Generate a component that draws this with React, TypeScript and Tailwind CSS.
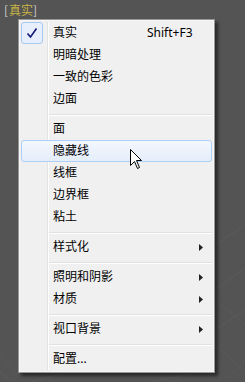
import React from "react"

type Item =
  | { kind: "item"; label: string; shortcut?: string; checked?: boolean; hover?: boolean; sub?: boolean }
  | { kind: "sep" }

const items: Item[] = [
  { kind: "item", label: "真实", shortcut: "Shift+F3", checked: true },
  { kind: "item", label: "明暗处理" },
  { kind: "item", label: "一致的色彩" },
  { kind: "item", label: "边面" },
  { kind: "sep" },
  { kind: "item", label: "面" },
  { kind: "item", label: "隐藏线", hover: true },
  { kind: "item", label: "线框" },
  { kind: "item", label: "边界框" },
  { kind: "item", label: "粘土" },
  { kind: "sep" },
  { kind: "item", label: "样式化", sub: true },
  { kind: "sep" },
  { kind: "item", label: "照明和阴影", sub: true },
  { kind: "item", label: "材质", sub: true },
  { kind: "sep" },
  { kind: "item", label: "视口背景", sub: true },
  { kind: "sep" },
  { kind: "item", label: "配置..." },
]

const font = { fontFamily: '"Noto Sans", "Noto Sans CJK SC", sans-serif' }

function Check() {
  return (
    <div className="flex h-[22px] w-[22px] items-center justify-center rounded-[3px] border border-[#a6c9ee] bg-[#e6effb]">
      <svg width="12" height="12" viewBox="0 0 12 12">
        <path d="M1.5 6.5 L4.5 10 L10.5 1.5" fill="none" stroke="#14187a" strokeWidth="1.6" />
      </svg>
    </div>
  )
}

function Row({ item }: { item: Extract<Item, { kind: "item" }> }) {
  return (
    <div
      className={
        item.hover
          ? "relative flex h-[22px] items-center rounded-[3px] border border-[#aed0f6] bg-gradient-to-b from-[#f3f8fe] to-[#e4edfa]"
          : "relative flex h-[22px] items-center border border-transparent"
      }
    >
      <div className="absolute left-[-1px] top-[-1px]">{item.checked && <Check />}</div>
      <span className="ml-[31px] w-[94px] text-[12px] leading-[20px] text-black">{item.label}</span>
      {item.shortcut && <span className="text-[12px] leading-[20px] text-black">{item.shortcut}</span>}
      {item.sub && (
        <svg className="absolute right-[8px] top-[7px]" width="4" height="7" viewBox="0 0 4 7">
          <path d="M0 0 L4 3.5 L0 7 Z" fill="#202020" />
        </svg>
      )}
    </div>
  )
}

export default function App() {
  return (
    <div className="relative h-[382px] w-[245px] overflow-hidden bg-[#545454]" style={font}>
      <svg className="absolute inset-0" width="245" height="382">
        <g stroke="#5a5a5a" strokeWidth="1" fill="none">
          <path d="M215 245 L245 225" />
          <path d="M215 290 L245 268" />
          <path d="M215 330 L245 310" />
          <path d="M225 382 L245 360" />
          <path d="M215 300 L245 325" />
          <path d="M215 345 L245 372" />
          <path d="M0 355 L18 375" />
          <path d="M0 372 L14 382" />
          <path d="M30 382 L60 374" />
          <path d="M150 382 L190 374" />
        </g>
      </svg>

      <div className="relative flex pl-[4px] pt-[3px] text-[12px] leading-[14px]" style={{ fontFamily: '"Noto Sans CJK SC", sans-serif' }}>
        <span className="text-[#cfcfcf]">[</span>
        <span className="ml-[1px] text-[#c9b446]">真实</span>
        <span className="text-[#cfcfcf]">]</span>
      </div>

      <div className="absolute left-[18px] top-[19px] w-[197px] border border-[#979797] bg-[#f0f0f0] p-[2px] shadow-[inset_0_0_0_1px_#f7f7f7,3px_3px_3px_rgba(0,0,0,0.5)]">
        <div className="absolute bottom-[2px] left-[28px] top-[2px] w-px bg-[#e2e3e3]" />
        <div className="absolute bottom-[2px] left-[29px] top-[2px] w-px bg-white" />
        <div className="relative flex flex-col">
          {items.map((it, i) =>
            it.kind === "sep" ? (
              <div key={i} className="h-[8px] pl-[28px] pt-[4px]">
                <div className="h-px bg-[#e0e0e0]" />
                <div className="h-px bg-white" />
              </div>
            ) : (
              <Row key={i} item={it} />
            )
          )}
        </div>
      </div>

      <svg className="absolute left-[130px] top-[149px]" width="13" height="21" viewBox="0 0 13 21">
        <path
          d="M0.5 0.5 L0.5 16.5 L4.5 12.5 L7.5 19.5 L9.5 18.5 L6.5 11.5 L11.5 11.5 Z"
          fill="white"
          stroke="black"
          strokeWidth="1"
          strokeLinejoin="miter"
        />
      </svg>
    </div>
  )
}
